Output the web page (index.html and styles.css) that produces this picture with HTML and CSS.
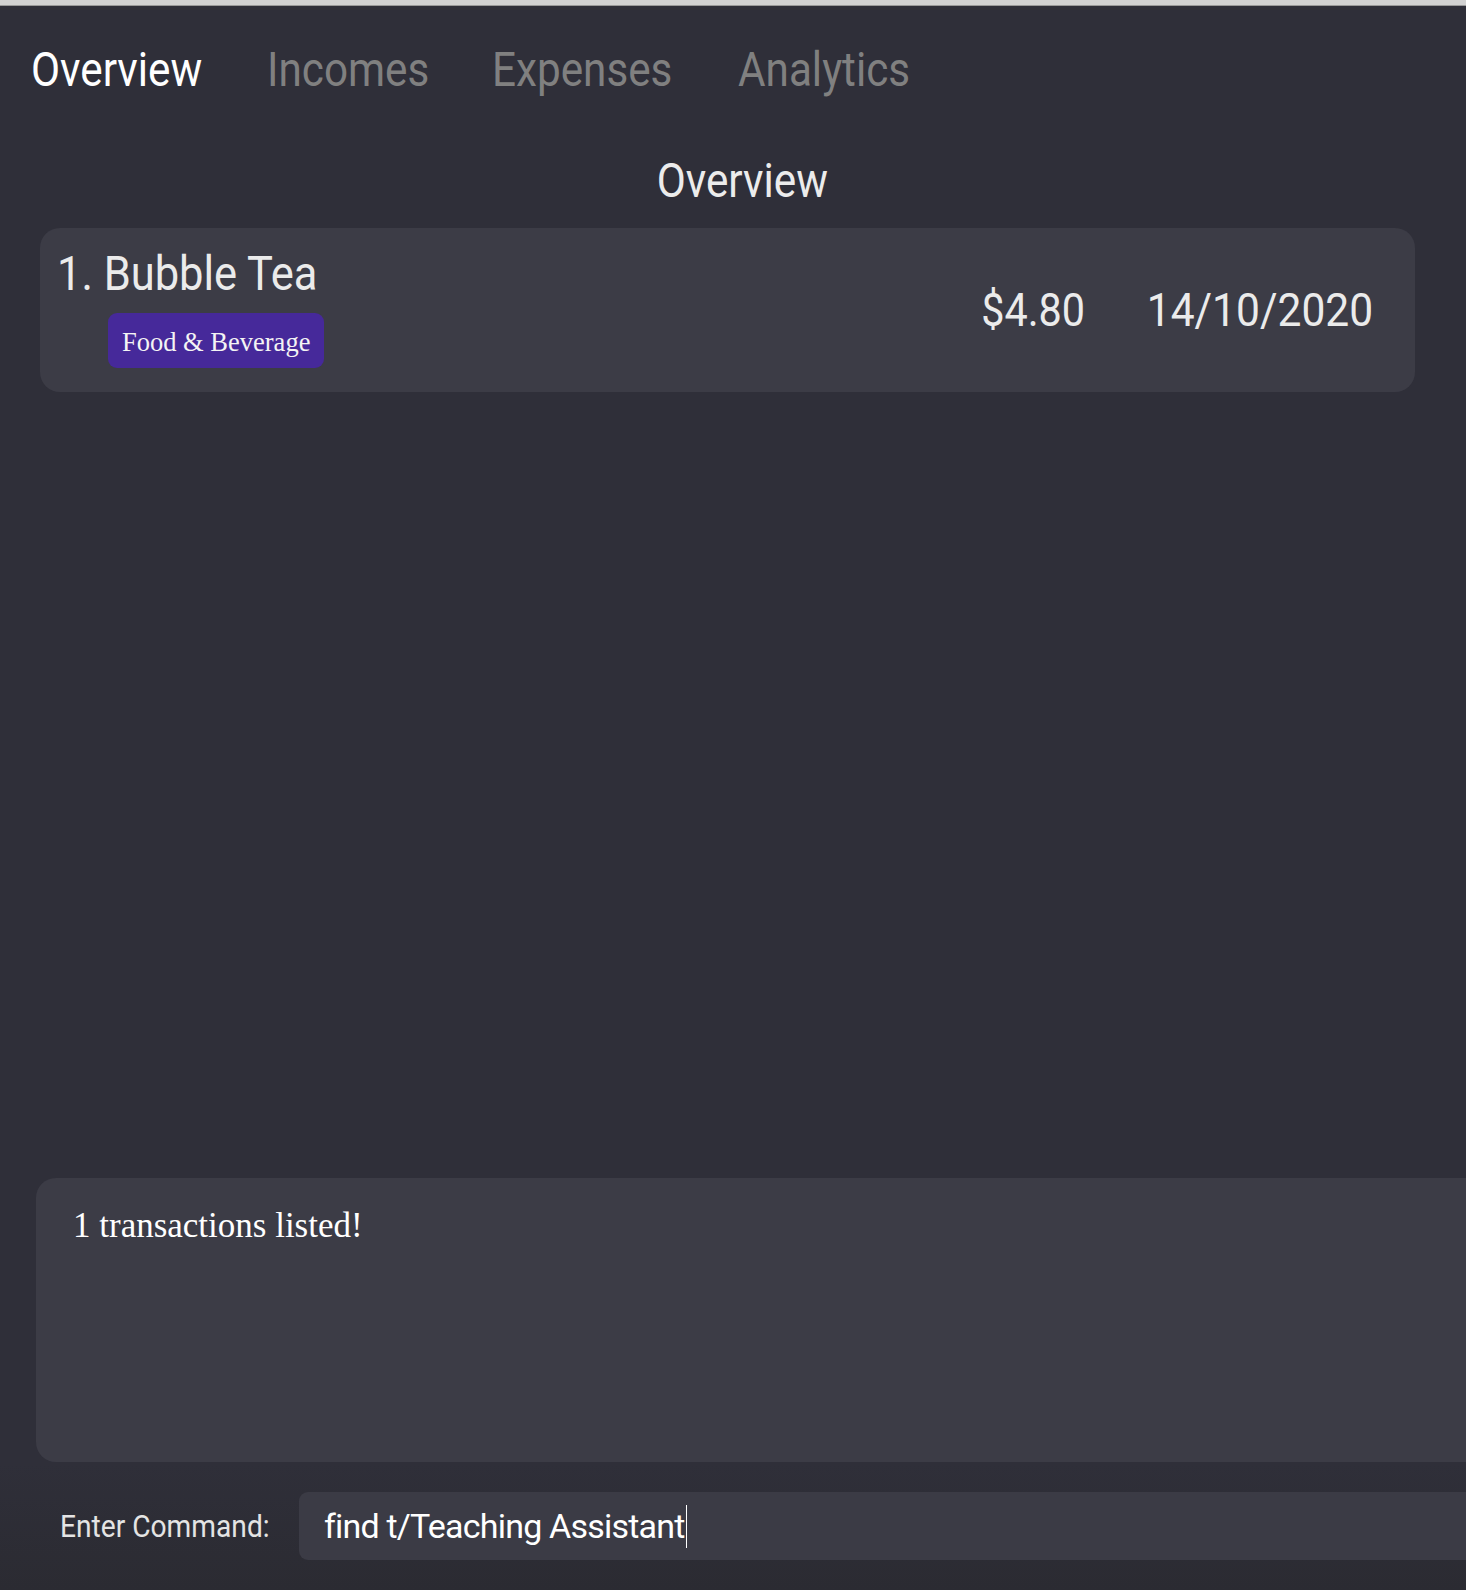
FILE: index.html
```html
<!DOCTYPE html>
<html lang="en">
<head>
<meta charset="utf-8">
<title>Overview</title>
<link rel="stylesheet" href="styles.css">
</head>
<body>
<div class="topbar"></div>
<div class="app">
  <nav class="tabs">
    <span class="tab active"><span class="cond">Overview</span></span>
    <span class="tab"><span class="cond">Incomes</span></span>
    <span class="tab"><span class="cond">Expenses</span></span>
    <span class="tab"><span class="cond">Analytics</span></span>
  </nav>
  <h1 class="page-title"><span class="cond center">Overview</span></h1>
  <section class="list">
    <article class="card">
      <div class="card-left">
        <div class="card-name"><span class="cond wide">1. Bubble Tea</span></div>
        <span class="tag">Food &amp; Beverage</span>
      </div>
      <div class="card-right">
        <span class="amount cond right">$4.80</span>
        <span class="date cond right wide">14/10/2020</span>
      </div>
    </article>
  </section>
  <section class="result">1 transactions listed!</section>
  <div class="command-row">
    <label class="command-label"><span class="cond">Enter Command:</span></label>
    <div class="command-input">find t/Teaching Assistant<span class="caret"></span></div>
  </div>
</div>
</body>
</html>
```

FILE: styles.css
```css
html, body {
  margin: 0;
  padding: 0;
}
body {
  width: 1466px;
  height: 1590px;
  overflow: hidden;
  background: #2f2f39;
  font-family: Roboto, "Liberation Sans", sans-serif;
}
.topbar {
  height: 5px;
  background: #d2d2d2;
  border-bottom: 1px solid #9a9a9a;
}
.app {
  width: 1485px;
  height: 1584px;
  display: flex;
  flex-direction: column;
  background: linear-gradient(#2f2f39 0%, #2f2f39 92%, #2b2b32 100%);
}
.cond {
  display: inline-block;
  transform: scaleX(0.88);
  transform-origin: left center;
  white-space: nowrap;
}
.cond.wide {
  transform: scaleX(0.905);
}
.cond.right {
  transform-origin: right center;
}
.cond.center {
  transform-origin: center center;
}
.tabs {
  display: flex;
  gap: 41px;
  padding: 36px 0 0 31px;
  height: 56px;
}
.tab {
  font-size: 48px;
  line-height: 56px;
  color: #808080;
}
.tab.active {
  color: #ffffff;
}
.page-title {
  margin: 56px 0 0 0;
  font-weight: 400;
  font-size: 48px;
  line-height: 54px;
  color: #ececec;
  text-align: center;
}
.list {
  flex: 1;
  padding-top: 20px;
}
.card {
  margin-left: 40px;
  width: 1375px;
  box-sizing: border-box;
  height: 164px;
  background: #3c3c46;
  border-radius: 20px;
  padding: 18px 42px 0 17px;
  display: flex;
  justify-content: space-between;
  align-items: center;
}
.card-left {
  align-self: flex-start;
  display: flex;
  flex-direction: column;
  align-items: flex-start;
}
.card-name {
  font-size: 48px;
  line-height: 56px;
  color: #ebebeb;
}
.tag {
  margin: 11px 0 0 51px;
  height: 55px;
  box-sizing: border-box;
  padding: 14px 14px 0 14px;
  background: #46299a;
  border-radius: 9px;
  color: #f4f4f4;
  font-family: "Liberation Serif", serif;
  font-size: 26.5px;
  line-height: 31px;
  white-space: nowrap;
}
.card-right {
  display: flex;
  gap: 38px;
  font-size: 47px;
  line-height: 56px;
  color: #ebebeb;
  margin-top: -18px;
}
.result {
  margin-left: 36px;
  height: 284px;
  box-sizing: border-box;
  width: 1500px;
  background: #3c3c46;
  border-radius: 20px;
  padding: 28px 0 0 37px;
  color: #ffffff;
  font-family: "Liberation Serif", serif;
  font-size: 35px;
  line-height: 40px;
}
.command-row {
  display: flex;
  align-items: center;
  margin-top: 30px;
  margin-bottom: 30px;
  padding-left: 60px;
}
.command-label {
  width: 239px;
  font-size: 32px;
  line-height: 40px;
  color: #e4e4e4;
}
.command-input {
  flex: 1;
  height: 68px;
  box-sizing: border-box;
  background: #3b3b45;
  border-radius: 9px;
  padding-left: 25px;
  display: flex;
  align-items: center;
  color: #ffffff;
  font-family: Roboto, "Liberation Sans", sans-serif;
  font-size: 34px;
  letter-spacing: -0.8px;
  white-space: pre;
}
.caret {
  display: inline-block;
  width: 0;
  height: 43px;
  border-left: 1.5px solid #ffffff;
  margin-left: 1px;
}
```
